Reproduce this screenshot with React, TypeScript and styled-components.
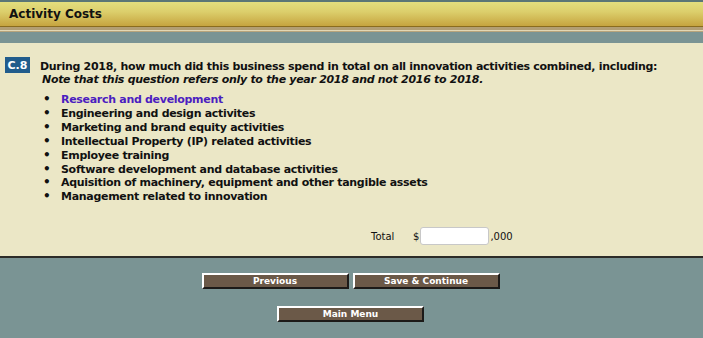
import styled, { createGlobalStyle } from "styled-components";

const GlobalStyle = createGlobalStyle`
  html, body {
    margin: 0;
    padding: 0;
    background: #7a9494;
    font-family: "DejaVu Sans", Verdana, sans-serif;
  }
`;

const Page = styled.div`
  width: 703px;
  height: 338px;
  display: flex;
  flex-direction: column;
  background: #7a9494;
  overflow: hidden;
`;

const TopEdge = styled.div`
  height: 2px;
  background: #5b7676;
`;

const TitleBar = styled.div`
  height: 24px;
  background: linear-gradient(#e3de7e, #dccf6c 40%, #c6a43f);
  border-bottom: 1px solid #8a6c1e;
  display: flex;
  align-items: center;
  padding-left: 9px;
`;

const Title = styled.h1`
  margin: 0;
  font-size: 12px;
  font-weight: bold;
  color: #111;
`;

const TanBand = styled.div`
  height: 5px;
  background: linear-gradient(#b29e74 0 3px, #e3d7b4 3px 4px, #b7a47c 4px);
`;

const TealBand = styled.div`
  height: 11px;
  background: #7a9494;
`;

const Content = styled.div`
  height: 215px;
  background: #ebe7c6;
  border-bottom: 2px solid #2c2c28;
  padding: 14px 0 0 5px;
  box-sizing: border-box;
  display: flex;
  flex-direction: column;
  font-size: 11px;
  font-weight: bold;
  letter-spacing: -0.3px;
  color: #111;
`;

const QuestionRow = styled.div`
  display: flex;
  align-items: flex-start;
  gap: 10px;
`;

const Badge = styled.span`
  background: #215c8c;
  color: #fff;
  font-size: 11px;
  letter-spacing: 0;
  width: 25px;
  height: 16px;
  display: flex;
  align-items: center;
  justify-content: center;
  flex-shrink: 0;
`;

const QuestionText = styled.div`
  line-height: 13px;
  padding-top: 3px;
`;

const Note = styled.div`
  font-style: italic;
  padding-left: 2px;
`;

const List = styled.ul`
  margin: 7px 0 0 0;
  padding-left: 38px;
  list-style: none;
  line-height: 13.9px;
`;

const Item = styled.li<{ $link?: boolean }>`
  display: flex;
  color: ${(p) => (p.$link ? "#4b1ec0" : "#111")};

  &::before {
    content: "•";
    color: #111;
    width: 18px;
    font-size: 12px;
  }
`;

const TotalRow = styled.div`
  display: flex;
  align-items: center;
  margin-top: 23px;
  padding-left: 366px;
  font-size: 10px;
  font-weight: normal;
  letter-spacing: 0;
`;

const TotalLabel = styled.span`
  width: 42px;
`;

const AmountInput = styled.input`
  width: 69px;
  height: 18px;
  box-sizing: border-box;
  border: 1px solid #c8c8c8;
  border-radius: 3px;
  background: #fff;
  margin: 0 1px;
`;

const Footer = styled.div`
  display: flex;
  flex-direction: column;
  align-items: center;
  padding-top: 15px;
  gap: 17px;
`;

const ButtonRow = styled.div`
  display: flex;
  gap: 4px;
  margin-right: 2px;
`;

const NavButton = styled.button`
  width: 147px;
  height: 16px;
  box-sizing: border-box;
  background: #6b5948;
  color: #fff;
  font-family: "DejaVu Sans", Verdana, sans-serif;
  font-size: 9px;
  font-weight: bold;
  padding: 0;
  border-style: solid;
  border-width: 2px;
  border-color: #fff #1c1a18 #1c1a18 #fff;
  cursor: pointer;
  line-height: 12px;
`;

const MenuButton = styled(NavButton)`
  margin-right: 2px;
`;

const items = [
  "Engineering and design activites",
  "Marketing and brand equity activities",
  "Intellectual Property (IP) related activities",
  "Employee training",
  "Software development and database activities",
  "Aquisition of machinery, equipment and other tangible assets",
  "Management related to innovation",
];

function App() {
  return (
    <Page>
      <GlobalStyle />
      <TopEdge />
      <TitleBar>
        <Title>Activity Costs</Title>
      </TitleBar>
      <TanBand />
      <TealBand />
      <Content>
        <QuestionRow>
          <Badge>C.8</Badge>
          <QuestionText>
            During 2018, how much did this business spend in total on all innovation activities combined, including:
            <Note>Note that this question refers only to the year 2018 and not 2016 to 2018.</Note>
          </QuestionText>
        </QuestionRow>
        <List>
          <Item $link>Research and development</Item>
          {items.map((it) => (
            <Item key={it}>{it}</Item>
          ))}
        </List>
        <TotalRow>
          <TotalLabel>Total</TotalLabel>
          <span>$</span>
          <AmountInput type="text" />
          <span>,000</span>
        </TotalRow>
      </Content>
      <Footer>
        <ButtonRow>
          <NavButton>Previous</NavButton>
          <NavButton>Save &amp; Continue</NavButton>
        </ButtonRow>
        <MenuButton>Main Menu</MenuButton>
      </Footer>
    </Page>
  );
}

export default App;
